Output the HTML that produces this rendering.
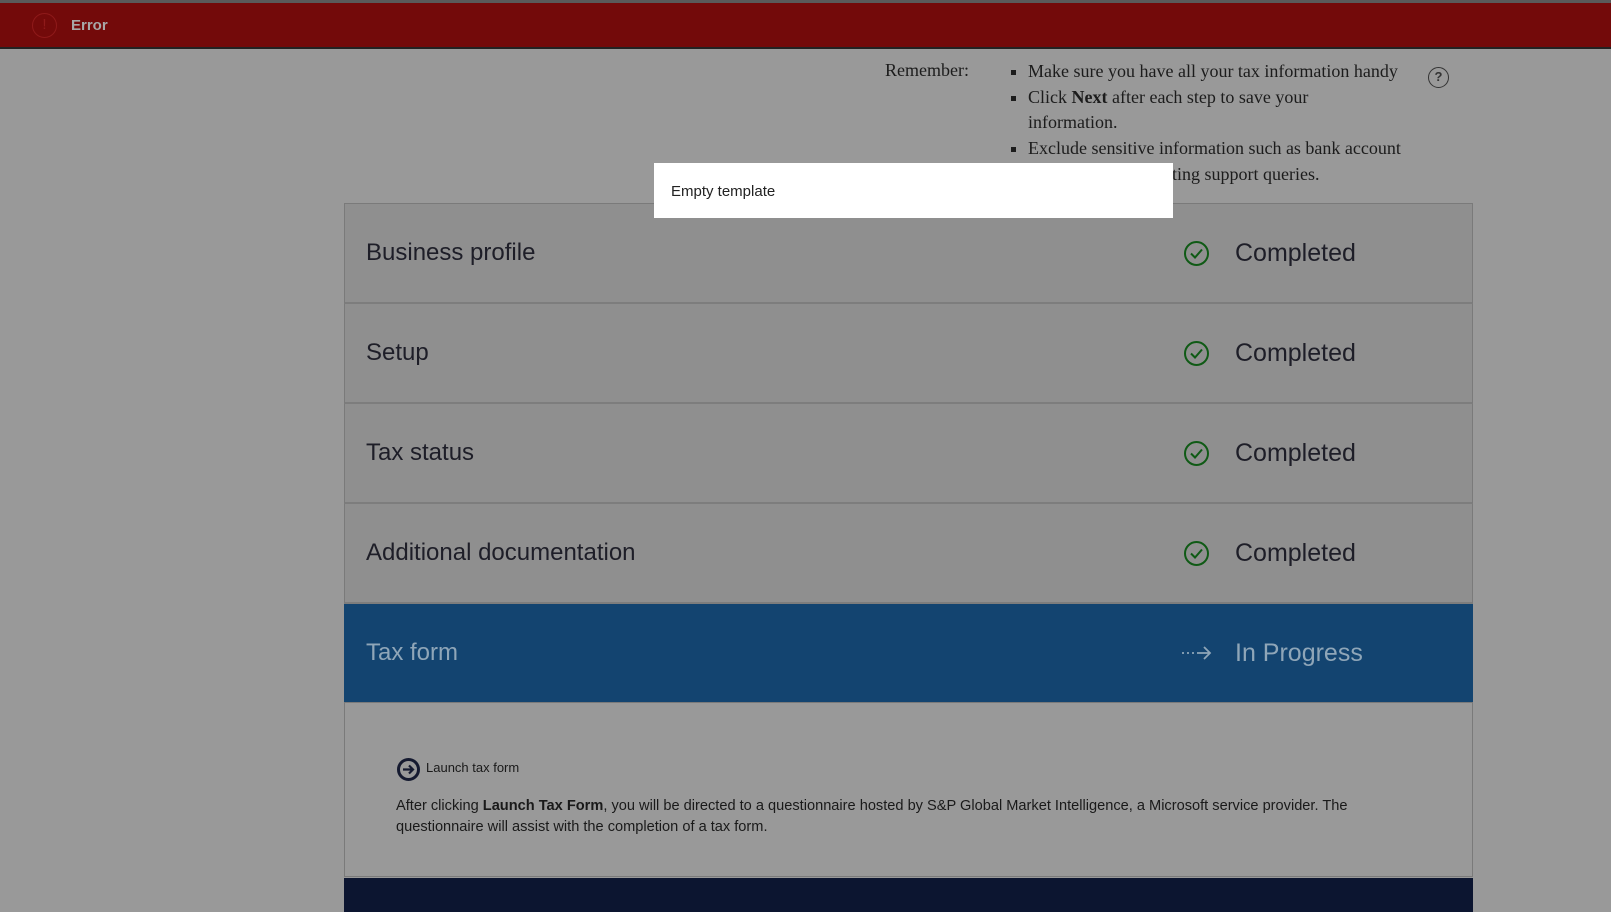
<!DOCTYPE html>
<html><head><meta charset="utf-8"><style>
*{margin:0;padding:0;box-sizing:border-box}
body{width:1611px;height:912px;background:#999;overflow:hidden;position:relative;font-family:"Liberation Sans",sans-serif}
.topline{position:absolute;left:0;top:0;width:1611px;height:3px;background:#5a5a5a}
.bar{position:absolute;left:0;top:3px;width:1611px;height:46px;background:#730a0a;border-bottom:2px solid #222}
.bar .ic{position:absolute;left:32px;top:10px;width:25px;height:25px;border:1.5px solid #8f1a1a;border-radius:50%;color:#8f1a1a;font-size:15px;text-align:center;line-height:22px}
.bar .t{position:absolute;left:71px;top:14px;color:#a8a8a8;font-weight:bold;font-size:15px}
.rem{position:absolute;left:885px;top:60px;font-family:"Liberation Serif",serif;font-size:18px;color:#1c1c1c}
.list{position:absolute;left:1010px;top:59px;width:391px;font-family:"Liberation Serif",serif;font-size:18px;color:#1c1c1c;line-height:25.7px}
.list div{position:relative;padding-left:18px}
.list div:before{content:"";position:absolute;left:1px;top:11px;width:5px;height:5px;background:#1c1c1c}
.help{position:absolute;left:1428px;top:67px;width:21px;height:21px;border:1.5px solid #333;border-radius:50%;font-size:13px;font-weight:bold;text-align:center;line-height:18px;color:#333}
.panel{position:absolute;left:344px;top:203px;width:1129px}
.row{height:100px;background:#8f8f8f;border:1px solid #7a7a7a;border-top:none;border-bottom:2px solid #7d7d7d;position:relative}
.row:first-child{border-top:1px solid #7a7a7a;height:101px}
.row .ti{position:absolute;left:21px;top:0;line-height:98px;font-size:24px;color:#1e1e28}
.row .ck{position:absolute;left:839px;top:37px;width:25px;height:25px;border:2px solid #0f5a15;border-radius:50%}
.row .st{position:absolute;left:890px;top:0;line-height:98px;font-size:25px;color:#1e1e28}
.blue{background:#134470;border-color:#134470;height:98px}
.blue .ti,.blue .st{color:#8fa6b8;line-height:98px}
.content{height:175px;background:#999;border:1px solid #7a7a7a;position:relative;color:#1a1a1a}
.lic{position:absolute;left:52px;top:55px;width:23px;height:23px;border:3px solid #151a30;border-radius:50%}
.lt{position:absolute;left:81px;top:57px;font-size:13px}
.p{position:absolute;left:51px;top:93px;width:960px;font-size:14.6px;line-height:21px}
.navy{position:absolute;left:344px;top:878px;width:1129px;height:34px;background:#0c1530}
.pop{position:absolute;left:654px;top:163px;width:519px;height:55px;background:#fff;font-size:15px;color:#222;padding:20px 0 0 17px}
</style></head><body>
<div class="topline"></div>
<div class="bar"><div class="ic">!</div><div class="t">Error</div></div>
<div class="rem">Remember:</div>
<div class="list">
<div>Make sure you have all your tax information handy</div>
<div>Click <b>Next</b> after each step to save your information.</div>
<div>Exclude sensitive information such as bank account details when submitting support queries.</div>
</div>
<div class="help">?</div>
<div class="panel">
<div class="row"><div class="ti">Business profile</div><div class="ck"><svg width="21" height="21" viewBox="0 0 21 21"><path d="M5 10.5l4 4 7-8" stroke="#0f5a15" stroke-width="2" fill="none"/></svg></div><div class="st">Completed</div></div>
<div class="row"><div class="ti">Setup</div><div class="ck"><svg width="21" height="21" viewBox="0 0 21 21"><path d="M5 10.5l4 4 7-8" stroke="#0f5a15" stroke-width="2" fill="none"/></svg></div><div class="st">Completed</div></div>
<div class="row"><div class="ti">Tax status</div><div class="ck"><svg width="21" height="21" viewBox="0 0 21 21"><path d="M5 10.5l4 4 7-8" stroke="#0f5a15" stroke-width="2" fill="none"/></svg></div><div class="st">Completed</div></div>
<div class="row"><div class="ti">Additional documentation</div><div class="ck"><svg width="21" height="21" viewBox="0 0 21 21"><path d="M5 10.5l4 4 7-8" stroke="#0f5a15" stroke-width="2" fill="none"/></svg></div><div class="st">Completed</div></div>
<div class="row blue"><div class="ti">Tax form</div><svg style="position:absolute;left:836px;top:40px" width="32" height="18" viewBox="0 0 32 18"><path d="M1 9h2M6 9h2M11 9h2M16 9h13M23 3l6 6-6 6" stroke="#8fa6b8" stroke-width="1.8" fill="none"/></svg><div class="st">In Progress</div></div>
<div class="content"><div class="lic"><svg width="17" height="17" viewBox="0 0 17 17"><path d="M3 8.5h10M9 4.5l4 4-4 4" stroke="#151a30" stroke-width="2.2" fill="none"/></svg></div><div class="lt">Launch tax form</div>
<div class="p">After clicking <b>Launch Tax Form</b>, you will be directed to a questionnaire hosted by S&amp;P Global Market Intelligence, a Microsoft service provider. The questionnaire will assist with the completion of a tax form.</div></div>
</div>
<div class="navy"></div>
<div class="pop">Empty template</div>
</body></html>
